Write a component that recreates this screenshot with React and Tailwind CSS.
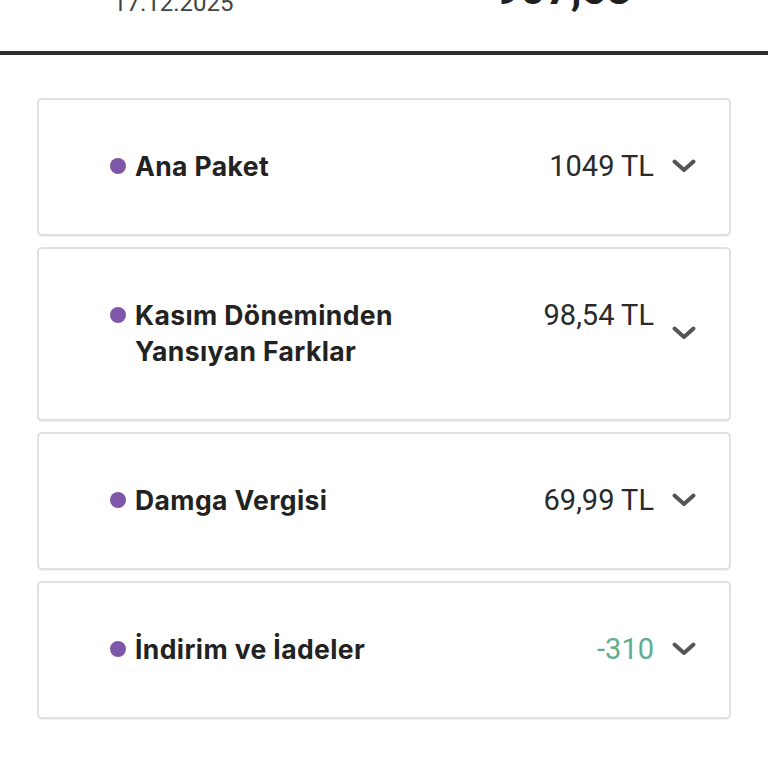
import React from "react";

const items = [
  { label: "Ana Paket", value: "1049 TL" },
  { label: "Kasım Döneminden Yansıyan Farklar", value: "98,54 TL" },
  { label: "Damga Vergisi", value: "69,99 TL" },
  { label: "İndirim ve İadeler", value: "-310", green: true },
];

function Chevron() {
  return (
    <svg width="26" height="16" viewBox="0 0 26 16" className="shrink-0">
      <polyline
        points="3.5,3.5 13,12 22.5,3.5"
        fill="none"
        stroke="#555555"
        strokeWidth="4"
        strokeLinecap="round"
        strokeLinejoin="round"
      />
    </svg>
  );
}

export default function App() {
  return (
    <div className="w-[768px] h-[768px] bg-white overflow-hidden" style={{ fontFamily: "Inter, 'Noto Sans', sans-serif" }}>
      <div className="h-[51px] overflow-hidden flex items-start justify-between pl-[113px] pr-[136px]">
        <div className="-mt-[9px] text-[24px] leading-none text-[#444444] font-['Roboto',sans-serif]">17.12.2025</div>
        <div className="-mt-[33px] text-[44px] leading-none font-bold text-[#1f1f1f] font-['Roboto',sans-serif]">907,53</div>
      </div>
      <div className="h-[4px] bg-[#2e2e2e]" />
      <div className="px-[37px] pt-[43px] flex flex-col gap-[11px]">
        {items.map((it) => (
          <div
            key={it.label}
            className="border-2 border-[#e0e0e0] rounded-[5px] bg-white shadow-[0_1px_1px_rgba(0,0,0,0.06)] flex items-center pl-[71px] pr-[32px] pt-[48px] pb-[50px]"
          >
            <div className="flex items-start flex-1">
              <div className="h-[36px] flex items-center mr-[9px]">
                <span className="w-[16px] h-[16px] rounded-full bg-[#7e57a8] block" />
              </div>
              <div className="max-w-[300px] text-[26.5px] leading-[36px] font-bold text-[#222222] tracking-[0.4px]">
                {it.label}
              </div>
              <div
                className={
                  "ml-auto text-[29px] leading-[36px] font-['Roboto',sans-serif] " +
                  (it.green ? "text-[#5fae8e]" : "text-[#2a2a2a]")
                }
              >
                {it.value}
              </div>
            </div>
            <div className="ml-[17px] flex items-center">
              <Chevron />
            </div>
          </div>
        ))}
      </div>
    </div>
  );
}
